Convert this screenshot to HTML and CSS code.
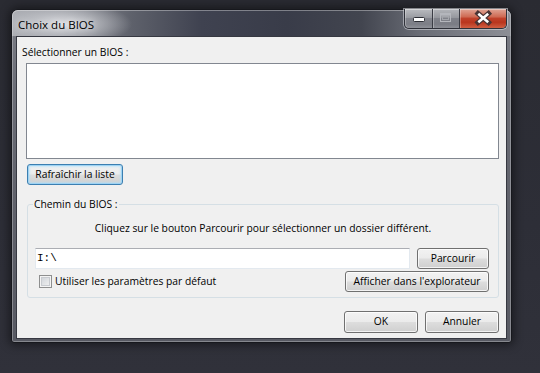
FILE: index.html
```html
<!DOCTYPE html>
<html lang="fr">
<head>
<meta charset="utf-8">
<title>Choix du BIOS</title>
<link rel="stylesheet" href="styles.css">
</head>
<body>
<div class="window">
  <div class="titlebar">
    <div class="title">Choix du BIOS</div>
    <div class="caption">
      <div class="cbtn cmin">
        <svg width="27" height="19" viewBox="0 0 27 19"><rect x="8.5" y="8.5" width="11" height="4" rx="1" fill="#fff" stroke="#2c2e35"/></svg>
      </div>
      <div class="cbtn cmax">
        <svg width="26" height="19" viewBox="0 0 26 19"><rect x="7.5" y="4.5" width="10" height="8" fill="none" stroke="#b4b6bc" stroke-width="1"/><rect x="9.5" y="7.5" width="6" height="3" fill="none" stroke="#a4a6ac" stroke-width="1"/><line x1="8" y1="5.8" x2="17" y2="5.8" stroke="#b4b6bc" stroke-width="1.6"/></svg>
      </div>
      <div class="cbtn cclose">
        <svg width="46" height="19" viewBox="0 0 46 19"><path d="M18 4.5 L28.5 13.5 M28.5 4.5 L18 13.5" stroke="#4a3434" stroke-width="5" stroke-linecap="square" fill="none"/><path d="M18.3 4.8 L28.2 13.2 M28.2 4.8 L18.3 13.2" stroke="#fff" stroke-width="2.6" fill="none"/></svg>
      </div>
    </div>
  </div>
  <div class="client">
    <div class="lbl">Sélectionner un BIOS :</div>
    <div class="listbox"></div>
    <div class="btn refresh">Rafraîchir la liste</div>
    <fieldset class="group">
      <legend class="legend">Chemin du BIOS :</legend>
      <div class="desc">Cliquez sur le bouton Parcourir pour sélectionner un dossier différent.</div>
      <div class="row">
        <div class="textbox">I:\</div>
        <div class="btn browse">Parcourir</div>
      </div>
      <div class="row row2">
        <div class="check"><span class="box"></span><span>Utiliser les paramètres par défaut</span></div>
        <div class="btn explore">Afficher dans l'explorateur</div>
      </div>
    </fieldset>
    <div class="footer">
      <div class="btn ok">OK</div>
      <div class="btn cancel">Annuler</div>
    </div>
  </div>
</div>
</body>
</html>
```

FILE: styles.css
```css
html, body {
  margin: 0;
}
body {
  width: 540px;
  height: 373px;
  box-sizing: border-box;
  overflow: hidden;
  padding: 9px 0 0 11px;
  background: linear-gradient(180deg, #2a2b32 0%, #2d2e37 60%, #30313a 100%);
  font-family: "Open Sans", "Noto Sans", sans-serif;
  font-size: 10.3px;
  color: #000;
}
.window {
  width: 501px;
  height: 334px;
  box-sizing: border-box;
  border: 1px solid #17181d;
  border-radius: 7px 7px 3px 3px;
  background: linear-gradient(180deg, #7d7f87 0%, #6b6d76 25%, #5f616a 60%, #585a63 100%);
  box-shadow: inset 0 0 0 1px rgba(255,255,255,0.28), 0 0 10px 2px rgba(0,0,0,0.45);
  display: flex;
  flex-direction: column;
}
.titlebar {
  height: 26px;
  display: flex;
  align-items: flex-start;
  border-radius: 6px 6px 0 0;
  background:
    radial-gradient(ellipse 70px 22px at 50px 14px, rgba(225,226,230,0.95) 0%, rgba(200,202,207,0.7) 45%, rgba(160,162,168,0) 100%),
    linear-gradient(90deg, #a6a8ae 0%, #8e9097 10%, #5e616b 24%, #3f4250 38%, #393c49 55%, #42454f 70%, #6a6d76 82%, #8d8f96 100%);
  box-shadow: inset 0 1px 0 rgba(255,255,255,0.35), inset 1px 0 0 rgba(255,255,255,0.25), inset -1px 0 0 rgba(255,255,255,0.25);
}
.title {
  flex: 1;
  padding: 7px 0 0 6px;
  font-size: 11.5px;
  line-height: 16px;
  color: #000;
  text-shadow: 0 0 6px rgba(255,255,255,0.8);
}
.caption {
  display: flex;
  margin-top: -1px;
  margin-right: 4px;
  height: 19px;
  border: 1px solid #2f3139;
  border-top: none;
  border-radius: 0 0 5px 5px;
  overflow: hidden;
  box-shadow: 0 0 0 1px rgba(220,222,228,0.55);
}
.cbtn {
  height: 19px;
  display: flex;
}
.cmin {
  width: 27px;
  border-right: 1px solid #3a3c44;
  border-bottom-left-radius: 4px;
  background: linear-gradient(180deg, #b9bbc0 0%, #9a9ca2 45%, #83858d 50%, #7c7e86 80%, #8f9198 100%);
  box-shadow: inset 0 1px 0 rgba(255,255,255,0.4), inset 1px 0 0 rgba(255,255,255,0.3);
}
.cmax {
  width: 26px;
  border-right: 1px solid #3a3c44;
  background: linear-gradient(180deg, #b3b5ba 0%, #96989e 45%, #80828a 50%, #7a7c84 80%, #8c8e95 100%);
  box-shadow: inset 0 1px 0 rgba(255,255,255,0.4), inset 1px 0 0 rgba(255,255,255,0.3);
}
.cclose {
  width: 46px;
  border-bottom-right-radius: 4px;
  background: linear-gradient(180deg, #e0a595 0%, #cf6c55 40%, #c0412a 50%, #b9351d 70%, #cf5e42 100%);
  box-shadow: inset 0 1px 0 rgba(255,255,255,0.4), inset 1px 0 0 rgba(255,255,255,0.3);
}
.client {
  flex: 1;
  margin: 0 4px 3px;
  border: 1px solid #363841;
  background: #f0f0f0;
  display: flex;
  flex-direction: column;
  line-height: 15px;
}
.lbl {
  margin: 8px 0 0 5px;
}
.listbox {
  margin: 3px 0 0 9px;
  width: 473px;
  height: 96px;
  box-sizing: border-box;
  border: 1px solid #828790;
  background: #fff;
}
.btn {
  box-sizing: border-box;
  height: 21px;
  border: 1px solid #707070;
  border-radius: 3px;
  background: linear-gradient(180deg, #f2f2f2 0%, #ebebeb 48%, #dddddd 52%, #cfcfcf 100%);
  box-shadow: inset 0 0 0 1px rgba(255,255,255,0.75);
  text-align: center;
  line-height: 18px;
  white-space: nowrap;
}
.refresh {
  margin: 5px 0 0 10px;
  width: 96px;
  border-color: #3c7fb1;
  box-shadow: inset 0 0 0 1px #9ed3f3, inset 0 0 2px 2px rgba(175,222,248,0.6);
}
.group {
  margin: 12px 0 0 10px;
  width: 472px;
  box-sizing: border-box;
  padding: 0 5px 5px 5px;
  border: 1px solid #d5dfe5;
  border-radius: 3px;
  min-inline-size: 0;
}
.legend {
  padding: 0 1px;
  line-height: 15px;
}
.desc {
  margin-top: 9px;
  text-align: center;
}
.row {
  display: flex;
  align-items: flex-start;
  margin-top: 12px;
}
.row2 {
  margin-top: 2px;
  align-items: center;
}
.textbox {
  margin-left: 2px;
  width: 375px;
  height: 21px;
  box-sizing: border-box;
  border: 1px solid #e3e9ef;
  border-top-color: #abadb3;
  background: #fff;
  font-family: "Liberation Mono", monospace;
  font-size: 11px;
  line-height: 19px;
  padding-left: 1px;
}
.browse {
  margin-left: auto;
  margin-right: 4px;
  width: 72px;
  height: 21px;
}
.check {
  display: flex;
  align-items: center;
  margin-left: 6px;
  gap: 3px;
}
.box {
  width: 13px;
  height: 13px;
  box-sizing: border-box;
  border: 1px solid #8e8f8f;
  background: linear-gradient(135deg, #cbcfd5 0%, #e4e6e8 60%, #f4f4f4 100%);
  box-shadow: inset 0 0 0 1px #f4f4f4, inset 0 0 0 2px #c8cbd0;
}
.explore {
  margin-left: auto;
  margin-right: 4px;
  width: 144px;
  height: 21px;
}
.footer {
  display: flex;
  justify-content: flex-end;
  gap: 7px;
  margin: 13px 7px 0 0;
}
.ok, .cancel {
  width: 74px;
  height: 22px;
  line-height: 19px;
}
```
